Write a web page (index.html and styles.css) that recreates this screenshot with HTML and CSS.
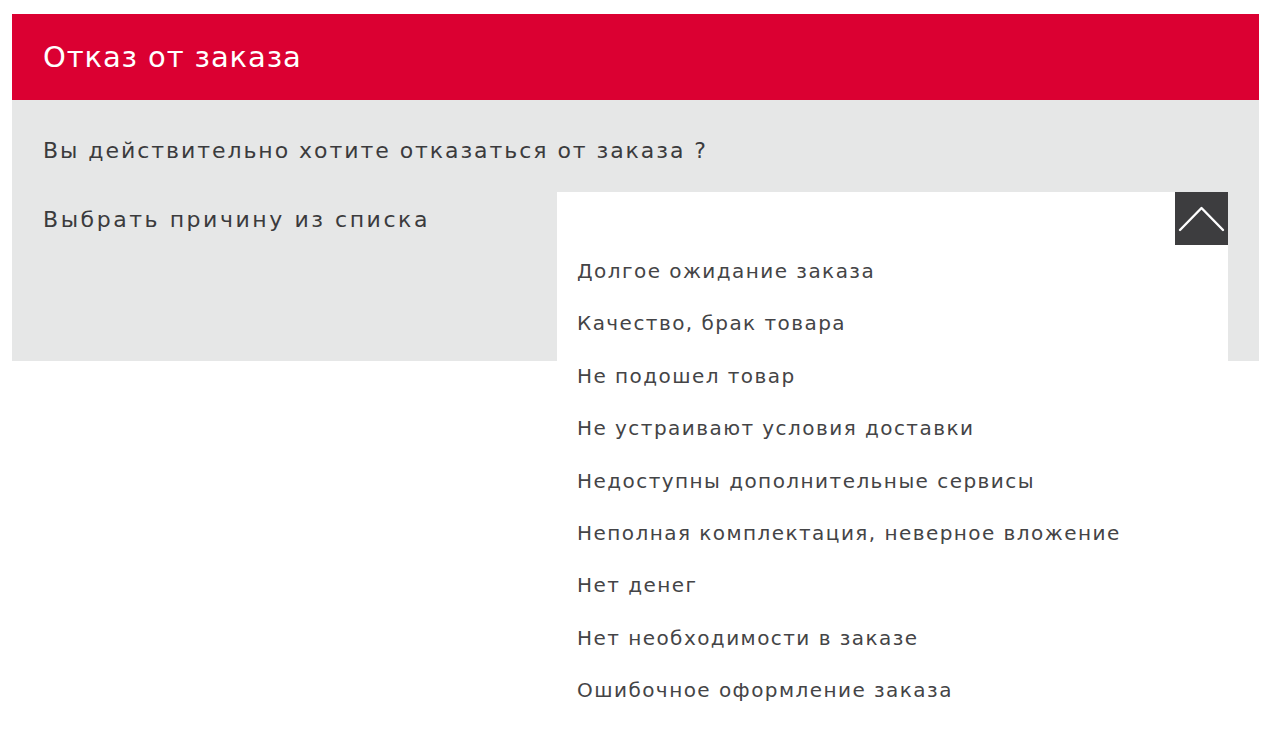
FILE: index.html
```html
<!DOCTYPE html>
<html lang="ru">
<head>
<meta charset="utf-8">
<title>Отказ от заказа</title>
<link rel="stylesheet" href="styles.css">
</head>
<body>
<div class="modal">
  <div class="modal-head">
    <h1 class="modal-title">Отказ от заказа</h1>
  </div>
  <div class="modal-body">
    <p class="question">Вы действительно хотите отказаться от заказа ?</p>
    <div class="reason-row">
      <div class="reason-label">Выбрать причину из списка</div>
      <div class="select">
        <div class="select-head">
          <span class="select-value"></span>
          <span class="select-btn">
            <svg width="53" height="53" viewBox="0 0 53 53"><polyline points="5,38 26.5,16 48,38" fill="none" stroke="#fff" stroke-width="2.4" stroke-linecap="round" stroke-linejoin="round"/></svg>
          </span>
        </div>
        <ul class="select-list">
          <li>Долгое ожидание заказа</li>
          <li>Качество, брак товара</li>
          <li>Не подошел товар</li>
          <li>Не устраивают условия доставки</li>
          <li>Недоступны дополнительные сервисы</li>
          <li>Неполная комплектация, неверное вложение</li>
          <li>Нет денег</li>
          <li>Нет необходимости в заказе</li>
          <li>Ошибочное оформление заказа</li>
        </ul>
      </div>
    </div>
  </div>
</div>
</body>
</html>
```
FILE: styles.css
```css
html, body {
  margin: 0;
  padding: 0;
  background: #ffffff;
}
body {
  min-height: 752px;
  font-family: "DejaVu Sans", "Liberation Sans", sans-serif;
  color: #3b3b3d;
}
.modal {
  margin: 14px 0 0 12px;
  width: 1247px;
}
.modal-head {
  background: #db0032;
  height: 86px;
  display: flex;
  align-items: center;
  padding: 0 31px;
}
.modal-title {
  margin: 0;
  font-size: 29px;
  font-weight: normal;
  color: #ffffff;
  letter-spacing: 0.9px;
}
.modal-body {
  background: #e6e7e7;
  height: 261px;
  box-sizing: border-box;
  padding: 36px 31px 0 31px;
}
.question {
  margin: 0;
  font-size: 22px;
  line-height: 30px;
  letter-spacing: 1.95px;
}
.reason-row {
  display: flex;
  margin-top: 26px;
}
.reason-label {
  width: 514px;
  flex: none;
  font-size: 22px;
  line-height: 30px;
  padding-top: 13px;
  letter-spacing: 2.55px;
}
.select {
  position: relative;
  width: 671px;
  flex: none;
  background: #ffffff;
}
.select-head {
  height: 53px;
  display: flex;
  justify-content: space-between;
}
.select-btn {
  width: 53px;
  height: 53px;
  background: #3d3d3f;
  display: block;
}
.select-btn svg {
  display: block;
}
.select-list {
  position: absolute;
  left: 0;
  top: 53px;
  width: 100%;
  margin: 0;
  padding: 0 0 8px 0;
  list-style: none;
  background: #ffffff;
}
.select-list li {
  height: 52.4px;
  line-height: 52.4px;
  padding-left: 20px;
  font-size: 20px;
  color: #444446;
  letter-spacing: 1.45px;
}
```
